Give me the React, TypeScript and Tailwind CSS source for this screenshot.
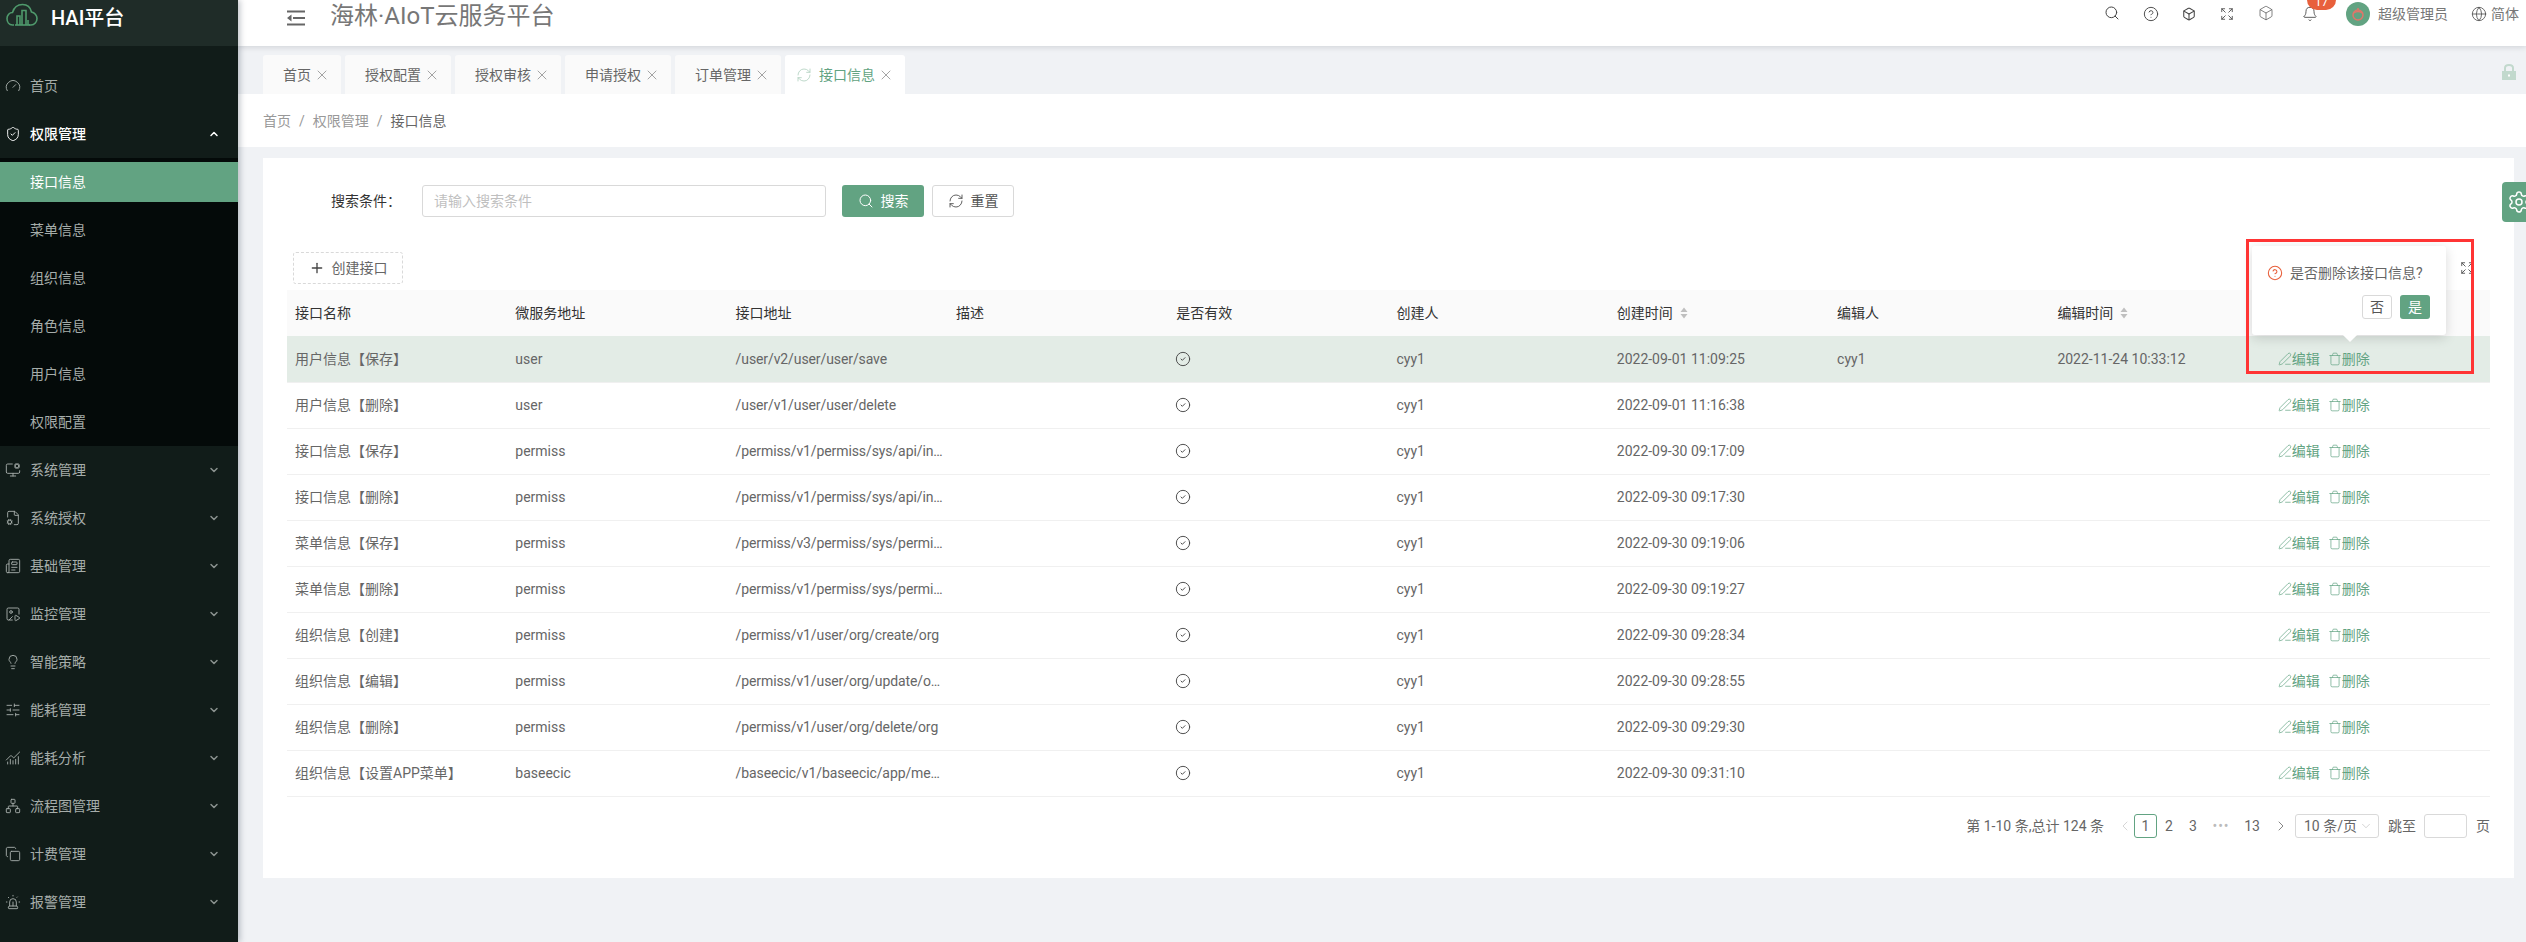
import React from "react";
import {
  Gauge, ChevronDown, ChevronUp, ChevronLeft, ChevronRight, MonitorCog, FileCog, Newspaper, ImagePlay, Lightbulb, SlidersHorizontal,
  ChartNoAxesCombined, Network, Copy, Siren, X, RefreshCw, Search, CircleHelp, Box, Expand, Bell, Globe,
  CircleCheck, PenLine, Trash, Plus, Settings, ShieldCheck,
} from "lucide-react";

const menus: [React.ComponentType<any>, string][] = [
  [MonitorCog, "系统管理"],
  [FileCog, "系统授权"],
  [Newspaper, "基础管理"],
  [ImagePlay, "监控管理"],
  [Lightbulb, "智能策略"],
  [SlidersHorizontal, "能耗管理"],
  [ChartNoAxesCombined, "能耗分析"],
  [Network, "流程图管理"],
  [Copy, "计费管理"],
  [Siren, "报警管理"],
];

const subs = ["接口信息", "菜单信息", "组织信息", "角色信息", "用户信息", "权限配置"];

const tabs: [string, string][] = [
  ["首页", "w-[78px]"],
  ["授权配置", "w-[106px]"],
  ["授权审核", "w-[106px]"],
  ["申请授权", "w-[106px]"],
  ["订单管理", "w-[106px]"],
];

const rows = [
  ["用户信息【保存】", "user", "/user/v2/user/user/save", "2022-09-01 11:09:25", "cyy1", "2022-11-24 10:33:12"],
  ["用户信息【删除】", "user", "/user/v1/user/user/delete", "2022-09-01 11:16:38", "", ""],
  ["接口信息【保存】", "permiss", "/permiss/v1/permiss/sys/api/in…", "2022-09-30 09:17:09", "", ""],
  ["接口信息【删除】", "permiss", "/permiss/v1/permiss/sys/api/in…", "2022-09-30 09:17:30", "", ""],
  ["菜单信息【保存】", "permiss", "/permiss/v3/permiss/sys/permi…", "2022-09-30 09:19:06", "", ""],
  ["菜单信息【删除】", "permiss", "/permiss/v1/permiss/sys/permi…", "2022-09-30 09:19:27", "", ""],
  ["组织信息【创建】", "permiss", "/permiss/v1/user/org/create/org", "2022-09-30 09:28:34", "", ""],
  ["组织信息【编辑】", "permiss", "/permiss/v1/user/org/update/o…", "2022-09-30 09:28:55", "", ""],
  ["组织信息【删除】", "permiss", "/permiss/v1/user/org/delete/org", "2022-09-30 09:29:30", "", ""],
  ["组织信息【设置APP菜单】", "baseecic", "/baseecic/v1/baseecic/app/me…", "2022-09-30 09:31:10", "", ""],
];

function Sorter() {
  return (
    <svg width="8" height="12" viewBox="0 0 8 12" className="ml-[7px]">
      <path d="M4 0.5 L7.5 5 H0.5 Z M4 11.5 L0.5 7 H7.5 Z" fill="#bfbfbf" />
    </svg>
  );
}

function Logo() {
  return (
    <svg width="32" height="27" viewBox="0 0 32 27" fill="none" stroke="#4f9a6c" strokeWidth="1.6" className="ml-[6px]">
      <path d="M8 22 H6.5 C3 22 1 19 1 15.5 C1 12 3.5 9.5 6.5 9.5 C8 4.5 12 1.5 16.5 1.5 C21 1.5 24.5 4.5 25.5 9 C28.5 9.5 31 12.5 31 15.5 C31 19 28.5 22 25 22 H23" />
      <path d="M11 22 V13 H14 V22 M16 22 V7.5 H20 V22 M22 22 V17 " />
      <path d="M9 22 H24" />
    </svg>
  );
}

export default function App() {
  return (
    <div className="relative flex h-[942px] w-full overflow-hidden bg-[#f0f2f5] font-['Roboto','Noto_Sans_CJK_SC',sans-serif] text-sm text-[#666]">
      <aside className="z-20 flex h-full w-[238px] shrink-0 flex-col bg-[#111c19] shadow-[2px_0_6px_rgba(0,21,41,0.25)]">
        <div className="flex h-[46px] shrink-0 items-start bg-[#1f2c28] pt-[3px]">
          <Logo />
          <span className="ml-[13px] mt-[1px] text-xl leading-[28px] font-medium text-white">HAI平台</span>
        </div>
        <nav className="pt-4 text-[#a6adaa]">
          <div className="flex h-12 items-center pl-[5px]">
            <Gauge size={16} strokeWidth={1.4} />
            <span className="ml-[9px]">首页</span>
          </div>
          <div className="flex h-12 items-center pl-[5px] pr-[18px] text-white">
            <ShieldCheck size={16} strokeWidth={1.4} />
            <span className="ml-[9px] font-medium">权限管理</span>
            <ChevronUp size={12} strokeWidth={3} className="ml-auto" />
          </div>
          <div className="bg-[#040a09]">
            {subs.map((s, i) => (
              <div key={s} className="flex h-12 items-center">
                <div className={"flex h-10 w-full items-center pl-[30px] " + (i === 0 ? "bg-[#62a382] text-white" : "")}>{s}</div>
              </div>
            ))}
          </div>
          {menus.map(([Icon, label]) => (
            <div key={label} className="flex h-12 items-center pl-[5px] pr-[18px]">
              <Icon size={16} strokeWidth={1.4} />
              <span className="ml-[9px]">{label}</span>
              <ChevronDown size={12} strokeWidth={3} className="ml-auto text-[#8a918e]" />
            </div>
          ))}
        </nav>
      </aside>

      <main className="flex min-w-0 flex-1 flex-col">
        <header className="z-10 flex h-[46px] shrink-0 items-start bg-white shadow-[0_1px_6px_rgba(0,21,41,0.15)]">
          <svg width="18" height="18" viewBox="0 0 18 18" className="ml-[49px] mt-[9px]" fill="#666">
            <path d="M0 1.5 H18 V3.5 H0 Z M6 8 H18 V10 H6 Z M0 14.5 H18 V16.5 H0 Z M4.5 5.5 V12.5 L0 9 Z" />
          </svg>
          <h1 className="ml-[25px] text-2xl leading-[32px] text-[#777]">海林·AIoT云服务平台</h1>
          <div className="ml-auto flex items-start pt-[5px] pr-[7px]">
            <Search size={16} strokeWidth={1.5} className="text-[#444]" />
            <CircleHelp size={16} strokeWidth={1.4} className="ml-[23px] mt-[1px] text-[#444]" />
            <Box size={14} strokeWidth={1.8} className="ml-[23px] mt-[2px] text-[#444]" />
            <Expand size={14} strokeWidth={1.6} className="ml-[24px] mt-[2px] text-[#555]" />
            <Box size={16} strokeWidth={1} className="ml-[24px] text-[#444]" />
            <div className="relative ml-[28px] mt-[1px]">
              <Bell size={16} strokeWidth={1.3} className="text-[#444]" />
              <span className="absolute left-[5px] top-[-17px] flex h-[21px] w-[29px] items-end justify-center rounded-[10px] bg-[#e8603c] text-xs leading-[15px] text-white">17</span>
            </div>
            <div className="ml-[28px] mt-[-3px] flex h-6 w-6 items-center justify-center rounded-full bg-[#62a382]">
              <svg width="14" height="14" viewBox="0 0 14 14" fill="none" stroke="#e0766a" strokeWidth="1.5">
                <circle cx="7" cy="8" r="5" />
                <path d="M3 6 C5 4 9 4 11 6 M7 1 V3" />
              </svg>
            </div>
            <span className="ml-[8px] mt-[-1px] text-sm leading-[20px] text-[#777]">超级管理员</span>
            <Globe size={16} strokeWidth={1.3} className="ml-[23px] mt-[1px] text-[#555]" />
            <span className="ml-[4px] mt-[-1px] text-sm leading-[20px] text-[#777]">简体</span>
          </div>
        </header>

        <div className="flex h-12 shrink-0 items-end justify-between pl-[25px] pr-[10px]">
          <div className="flex gap-1">
            {tabs.map(([t, w]) => (
              <div key={t} className={"flex h-[39px] items-center rounded-t-[3px] bg-[#fafafa] pl-5 " + w}>
                <span>{t}</span>
                <X size={16} strokeWidth={1} className="ml-[3px] text-[#777]" />
              </div>
            ))}
            <div className="flex h-[39px] w-[120px] items-center rounded-t-[3px] bg-white pl-[11px]">
              <RefreshCw size={16} strokeWidth={1.3} className="text-[#b5d3c3]" />
              <span className="ml-[7px] text-[#62a382]">接口信息</span>
              <X size={16} strokeWidth={1} className="ml-[3px] text-[#777]" />
            </div>
          </div>
          <svg width="14" height="16" viewBox="0 0 14 16" className="mb-[14px]" fill="#c2d9cd">
            <path d="M0 7 H14 V16 H0 Z" />
            <path d="M3 7 V4 C3 2 5 1 7 1 C9 1 11 2 11 4 V7" fill="none" stroke="#c2d9cd" strokeWidth="2" />
            <rect x="6" y="10.5" width="2" height="2" fill="#fff" />
          </svg>
        </div>

        <div className="flex h-[53px] shrink-0 items-center bg-white pl-[25px] text-[#999]">
          <span>首页</span>
          <span className="mx-2">/</span>
          <span>权限管理</span>
          <span className="mx-2">/</span>
          <span className="text-[#666]">接口信息</span>
        </div>

        <section className="mx-[25px] mr-[12px] mt-[11px] bg-white px-6 pt-[27px] pb-10">
          <div className="flex h-8 items-center">
            <label className="ml-[44px] w-[61px] whitespace-nowrap text-[#333]">搜索条件：</label>
            <div className="ml-[30px] flex h-8 w-[404px] items-center rounded-[3px] border border-[#d9d9d9] px-[11px] text-[#bfbfbf]">请输入搜索条件</div>
            <button className="ml-4 flex h-8 w-[82px] items-center justify-center gap-[7px] rounded-[3px] bg-[#62a382] text-white">
              <Search size={16} strokeWidth={1.5} />
              <span>搜索</span>
            </button>
            <button className="ml-2 flex h-8 w-[82px] items-center justify-center gap-[7px] rounded-[3px] border border-[#d9d9d9] text-[#555]">
              <RefreshCw size={16} strokeWidth={1.4} />
              <span>重置</span>
            </button>
          </div>

          <button className="ml-[6px] mt-[35px] flex h-8 w-[110px] items-center justify-center gap-[7px] rounded-[3px] border border-dashed border-[#d9d9d9] text-[#666]">
            <Plus size={16} strokeWidth={2} className="text-[#444]" />
            <span>创建接口</span>
          </button>

          <table className="mt-[6px] w-full table-fixed border-collapse">
            <thead>
              <tr className="h-[46px] bg-[#fafafa] text-left text-[#333]">
                <th className="px-2 font-normal">接口名称</th>
                <th className="px-2 font-normal">微服务地址</th>
                <th className="px-2 font-normal">接口地址</th>
                <th className="px-2 font-normal">描述</th>
                <th className="px-2 font-normal">是否有效</th>
                <th className="px-2 font-normal">创建人</th>
                <th className="px-2 font-normal"><span className="flex items-center">创建时间<Sorter /></span></th>
                <th className="px-2 font-normal">编辑人</th>
                <th className="px-2 font-normal"><span className="flex items-center">编辑时间<Sorter /></span></th>
                <th className="px-2 font-normal">操作</th>
              </tr>
            </thead>
            <tbody>
              {rows.map((r, i) => (
                <tr key={i} className={"h-[46px] border-b border-[#f0f0f0] " + (i === 0 ? "bg-[#e3ece6]" : "")}>
                  <td className="px-2 whitespace-nowrap">{r[0]}</td>
                  <td className="px-2 whitespace-nowrap">{r[1]}</td>
                  <td className="px-2 whitespace-nowrap tracking-[-0.1px]">{r[2]}</td>
                  <td className="px-2"></td>
                  <td className="px-2"><CircleCheck size={16} strokeWidth={1.4} className="ml-[-1px] text-[#444]" /></td>
                  <td className="px-2">cyy1</td>
                  <td className="px-2 whitespace-nowrap">{r[3]}</td>
                  <td className="px-2">{r[4]}</td>
                  <td className="px-2 whitespace-nowrap">{r[5]}</td>
                  <td className="px-2">
                    <div className="flex items-center text-[#62a382]">
                      <PenLine size={14} strokeWidth={1.2} />
                      <span>编辑</span>
                      <Trash size={14} strokeWidth={1.2} className="ml-[8px]" />
                      <span>删除</span>
                    </div>
                  </td>
                </tr>
              ))}
            </tbody>
          </table>

          <div className="mt-[17px] flex h-6 items-center justify-end text-[#666]">
            <span className="mr-[13px]">第 1-10 条,总计 124 条</span>
            <ChevronLeft size={16} strokeWidth={1.2} className="mr-[1px] text-[#ccc]" />
            <span className="flex h-6 w-[23px] items-center justify-center rounded-[3px] border border-[#62a382]">1</span>
            <span className="w-6 text-center">2</span>
            <span className="w-6 text-center">3</span>
            <span className="w-8 text-center tracking-[1px] text-[#bbb]">•••</span>
            <span className="w-[30px] text-center">13</span>
            <ChevronRight size={16} strokeWidth={1.2} className="ml-[6px] text-[#666]" />
            <span className="ml-[6px] flex h-6 w-[84px] items-center justify-between rounded-[3px] border border-[#d9d9d9] pl-2 pr-[5px]">
              10 条/页
              <ChevronDown size={14} strokeWidth={1.1} className="text-[#bbb]" />
            </span>
            <span className="ml-[9px]">跳至</span>
            <span className="ml-2 h-6 w-[43px] rounded-[3px] border border-[#d9d9d9]"></span>
            <span className="ml-[9px]">页</span>
          </div>
        </section>
      </main>

      <Expand size={14} strokeWidth={1.6} className="absolute left-[2460px] top-[261px] text-[#555]" />

      <div className="absolute left-[2252px] top-[246px] h-[89px] w-[194px] rounded-[3px] bg-white shadow-[0_3px_12px_rgba(0,0,0,0.15)]">
        <div className="absolute bottom-[-5px] left-[93px] h-[10px] w-[10px] rotate-45 bg-white" />
        <div className="relative flex items-center pl-[15px] pt-[17px]">
          <CircleHelp size={16} strokeWidth={1.6} className="text-[#e8603c]" />
          <span className="ml-[7px] leading-5">是否删除该接口信息?</span>
        </div>
        <div className="relative mt-[12px] flex justify-end gap-2 pr-4">
          <button className="h-6 w-[30px] rounded-[3px] border border-[#d9d9d9] text-[#555]">否</button>
          <button className="h-6 w-[30px] rounded-[3px] bg-[#62a382] text-white">是</button>
        </div>
      </div>

      <div className="pointer-events-none absolute left-[2246px] top-[239px] h-[135px] w-[228px] border-[3px] border-[#ff3434]" />

      <div className="absolute left-[2502px] top-[182px] flex h-10 w-6 items-center overflow-hidden rounded-l-[4px] bg-[#62a382] pl-[5px]">
        <Settings size={24} strokeWidth={1.5} className="shrink-0 text-white" />
      </div>
    </div>
  );
}
